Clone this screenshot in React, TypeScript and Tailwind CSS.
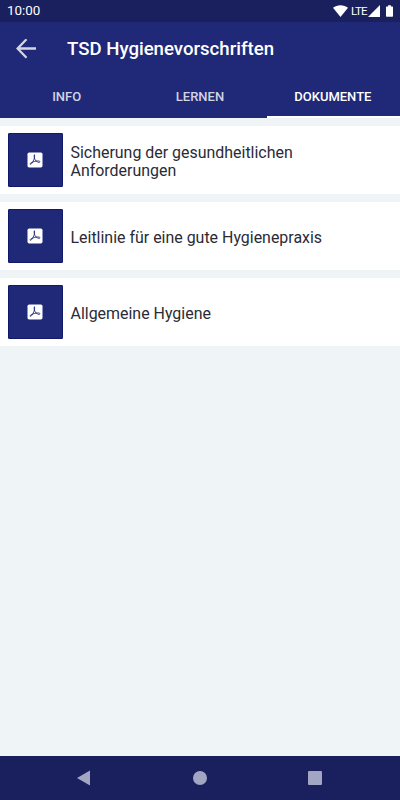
interface DocumentItem {
  id: number;
  title: string;
}

const tabs = ['Info', 'Lernen', 'Dokumente'];
const activeTab = 'Dokumente';

const documents: DocumentItem[] = [
  { id: 1, title: 'Sicherung der gesundheitlichen Anforderungen' },
  { id: 2, title: 'Leitlinie für eine gute Hygienepraxis' },
  { id: 3, title: 'Allgemeine Hygiene' },
];

function PdfIcon() {
  return (
    <svg className="mr-px h-5 w-5" viewBox="0 0 24 24">
      <rect x="3" y="3" width="18" height="18" rx="2" fill="#fff" />
      <path
        fill="none"
        stroke="#1f2978"
        strokeWidth="1.05"
        strokeLinecap="round"
        strokeLinejoin="round"
        d="M11.2 6.2c-1 1.2.4 5.6 2.2 7 1.4 1.2 3.4 2.1 4.2 1.5 1-.8-.2-1.7-2.3-1.6-2.1.1-4.9.7-6.9 1.6-1.6.7-2.6 1.7-2.2 2.4.7.8 2.5-1.4 3.5-3.5 1.2-2.4 2.8-6.4 1.5-7.4Z"
      />
    </svg>
  );
}

function StatusBar() {
  return (
    <div className="flex h-[22px] items-center bg-[#1a205e] pr-[7px] pl-[7px] text-white">
      <span className="flex-1 text-[13.4px] leading-[22px]">10:00</span>
      <svg className="h-3 w-[15px]" viewBox="0 0 15 12" fill="currentColor">
        <path d="M0 2.8C4.2-.7 10.8-.7 15 2.8L7.5 12Z" />
      </svg>
      <span className="ml-[3px] w-[17px] text-[11.5px] leading-[22px] tracking-[-0.7px]">LTE</span>
      <svg className="h-3 w-3" viewBox="0 0 12 12" fill="currentColor">
        <path d="M12 0v12H0Z" />
      </svg>
      <svg className="ml-[6px] h-3 w-[7px]" viewBox="0 0 8 13" fill="currentColor">
        <path d="M2.4 0h3.2v1.4H7.2q.8 0 .8.8v10q0 .8-.8.8H.8q-.8 0-.8-.8v-10q0-.8.8-.8h1.6Z" />
      </svg>
    </div>
  );
}

function DocumentCard({ document }: { document: DocumentItem }) {
  return (
    <li className="flex h-[68px] items-center bg-white px-2">
      <div className="flex h-[54px] w-[55px] shrink-0 items-center justify-center rounded-[1px] border border-[#10186b] bg-[#1f2978]">
        <PdfIcon />
      </div>
      <p className="ml-[7.5px] w-[270px] pt-1 text-[15.95px] leading-[18px] text-[#2b2b36]">
        {document.title}
      </p>
    </li>
  );
}

export default function App() {
  return (
    <div className="flex h-[800px] w-[400px] flex-col overflow-hidden bg-[#eff4f7] font-['Roboto','Liberation_Sans',sans-serif]">
      <StatusBar />
      <header className="bg-[#1f2978]">
        <div className="flex h-[53px] items-center pl-4">
          <svg
            className="h-5 w-5"
            viewBox="0 0 20 20"
            fill="none"
            stroke="#d3d5e6"
            strokeWidth="2.3"
          >
            <path d="M20 9.5H1.8M10.5 .3L1.6 9.5l8.9 9.2" />
          </svg>
          <h1 className="ml-[31px] pt-0.5 text-[18.6px] font-medium text-white">
            TSD Hygienevorschriften
          </h1>
        </div>
        <nav className="grid h-[43px] grid-cols-3 text-[13px] font-medium">
          {tabs.map((tab) => (
            <button
              key={tab}
              className={
                tab === activeTab
                  ? 'border-b-2 border-white pt-0.5 pr-px uppercase text-white'
                  : 'border-b-2 border-transparent pt-0.5 uppercase text-[#d2d4e4]'
              }
            >
              {tab}
            </button>
          ))}
        </nav>
      </header>

      {/* Dokumentenliste */}
      <ul className="flex flex-1 flex-col gap-2 pt-2">
        {documents.map((document) => (
          <DocumentCard key={document.id} document={document} />
        ))}
      </ul>

      <footer className="flex h-11 items-center bg-[#1a205e] text-[#a3a6c2]">
        <svg className="ml-[77px] h-4 w-[13px]" viewBox="0 0 13 16" fill="currentColor">
          <path d="M13 .5v15L0 8Z" />
        </svg>
        <div className="ml-[103px] h-3.5 w-3.5 rounded-full bg-current" />
        <div className="ml-[101px] h-3.5 w-3.5 rounded-[1px] bg-current" />
      </footer>
    </div>
  );
}
